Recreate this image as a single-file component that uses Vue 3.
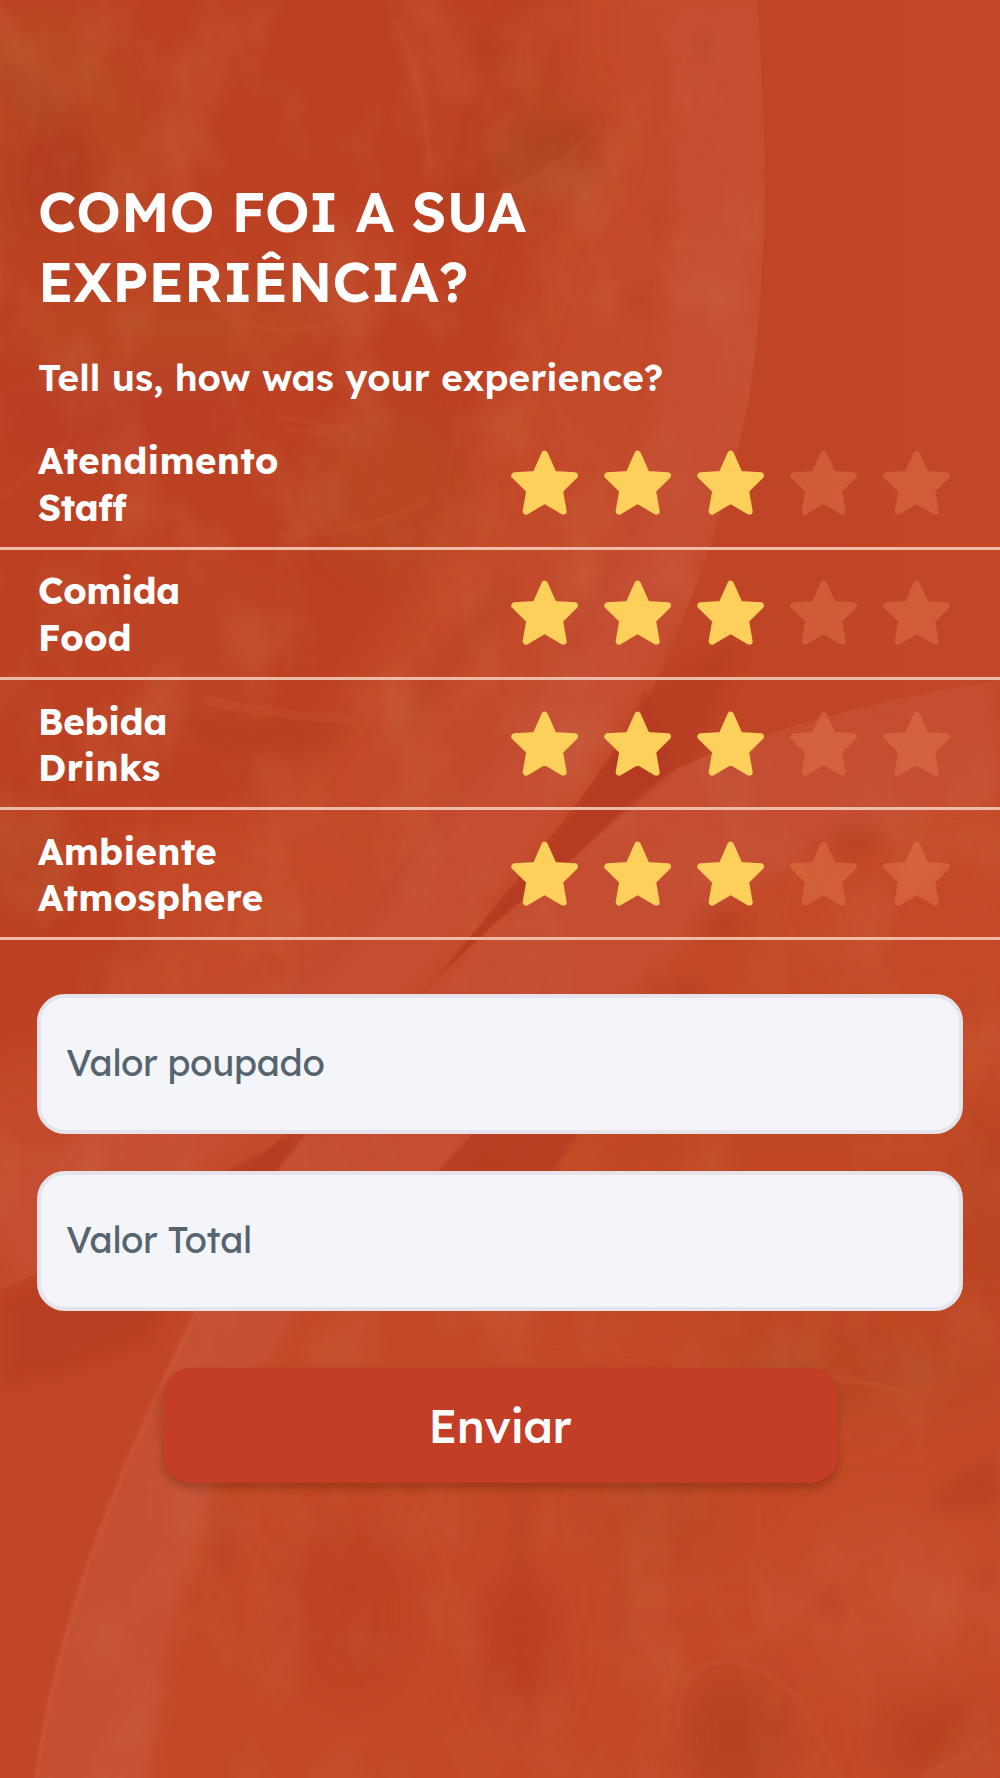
<script setup>
import { ref } from 'vue'

const ratings = ref([
  { id: 'staff', pt: 'Atendimento', en: 'Staff', value: 3 },
  { id: 'food', pt: 'Comida', en: 'Food', value: 3 },
  { id: 'drinks', pt: 'Bebida', en: 'Drinks', value: 3 },
  { id: 'atmosphere', pt: 'Ambiente', en: 'Atmosphere', value: 3 }
])
const saved = ref('')
const total = ref('')
</script>

<template>
  <main class="screen">
    <svg class="backdrop" viewBox="0 0 1000 1778" preserveAspectRatio="none" aria-hidden="true">
      <defs>
        <filter id="b2" x="-20%" y="-20%" width="140%" height="140%"><feGaussianBlur stdDeviation="1.5" /></filter>
        <filter id="b8" x="-50%" y="-50%" width="200%" height="200%"><feGaussianBlur stdDeviation="8" /></filter>
        <filter id="b30" x="-60%" y="-60%" width="220%" height="220%"><feGaussianBlur stdDeviation="24" /></filter>
        <filter id="mottle" x="0" y="0" width="100%" height="100%">
          <feTurbulence type="fractalNoise" baseFrequency=".013 .009" numOctaves="4" seed="12" />
          <feColorMatrix values="0 0 0 0 .63  0 0 0 0 .22  0 0 0 0 .1  2.6 0 0 0 -1.15" />
        </filter>
        <linearGradient id="wood" x1="0" x2="1" y1="0" y2="0">
          <stop offset="0" stop-color="#c04627" /><stop offset=".8" stop-color="#bf4526" /><stop offset="1" stop-color="#c24827" />
        </linearGradient>
        <clipPath id="plate">
          <path d="M0 0H757C768 150 768 270 750 390C732 500 690 610 645 705C585 800 500 900 435 980L240 1180L0 1290Z" />
        </clipPath>
        <clipPath id="plate2">
          <path d="M1000 680C880 700 760 730 676 769C630 795 600 835 574 857L497 921L440 975L300 1130L196 1310C130 1450 60 1600 35 1778H1000Z" />
        </clipPath>
      </defs>
      <rect width="1000" height="1778" fill="url(#wood)" />
      <g fill="#b53a20" filter="url(#b8)" opacity=".55">
        <path d="M645 690L740 640L690 780L570 880L430 1000L250 1180L210 1180L440 970Z" />
        <path d="M0 1295L190 1240L150 1340L60 1375L0 1385Z" />
      </g>
      <g clip-path="url(#plate)">
        <rect width="1000" height="1300" fill="#c34a2a" />
        <path d="M715 0C727 150 725 290 705 400C675 540 600 670 525 780C420 920 240 1110 0 1240" fill="none" stroke="#c54d32" stroke-width="100" filter="url(#b8)" />
        <g filter="url(#b30)">
          <path d="M-50 -50H560C570 120 540 300 480 460C420 600 310 740 230 850L100 1020L-50 1080Z" fill="#bc4123" />
          <ellipse cx="40" cy="130" rx="110" ry="130" fill="#b94923" />
          <ellipse cx="50" cy="175" rx="40" ry="70" fill="#b23b21" />
          <ellipse cx="545" cy="150" rx="60" ry="60" fill="#b54620" />
          <ellipse cx="170" cy="330" rx="170" ry="40" fill="#b94923" />
          <ellipse cx="390" cy="490" rx="85" ry="80" fill="#b84721" />
          <ellipse cx="120" cy="410" rx="130" ry="45" fill="#ba3e25" />
          <ellipse cx="200" cy="640" rx="80" ry="100" fill="#bd4428" />
          <ellipse cx="20" cy="860" rx="60" ry="60" fill="#b84522" />
          <ellipse cx="230" cy="870" rx="120" ry="50" fill="#c44825" />
        </g>
        <rect width="1000" height="1300" filter="url(#mottle)" opacity=".2" />
        <g filter="url(#b8)" fill="#a83c1e" opacity=".28">
          <circle cx="705" cy="45" r="9" /><circle cx="640" cy="305" r="13" /><circle cx="660" cy="220" r="8" /><circle cx="490" cy="55" r="20" />
          <path d="M0 60Q90 80 100 220L70 200Q60 130 0 100ZM430 200Q510 130 600 120L590 150Q500 180 420 260Z" />
          <path d="M420 680L500 570L515 600L390 760ZM180 710Q280 740 350 710L340 750Q240 760 180 730Z" />
        </g>
        <g filter="url(#b2)" fill="none" stroke="#ca6034" opacity=".2" stroke-width="5">
          <path d="M210 305Q285 355 370 305" /><path d="M480 200Q550 180 600 125" /><path d="M395 20Q425 80 430 170" />
          <path d="M205 700Q270 715 355 720" stroke-width="9" /><path d="M275 415L345 430M285 430L335 433" />
          <path d="M0 500Q30 470 70 440M280 535Q360 535 430 500" />
        </g>
        <path d="M640 500Q600 620 480 770L330 960L170 1090" fill="none" stroke="#b23c22" stroke-width="6" opacity=".5" filter="url(#b8)" />
      </g>
      <g clip-path="url(#plate2)">
        <rect y="650" width="1000" height="1130" fill="#c34926" />
        <path d="M1000 725C860 750 720 800 640 880L440 1080L300 1230" fill="none" stroke="#c44e31" stroke-width="150" filter="url(#b8)" />
        <path d="M280 1230C180 1380 110 1540 90 1800" fill="none" stroke="#c55034" stroke-width="120" filter="url(#b8)" />
        <g filter="url(#b30)">
          <path d="M520 1170L650 1110L1050 1100V1300L780 1330L500 1300Z" fill="#c04622" />
          <ellipse cx="930" cy="910" rx="110" ry="50" fill="#c54a27" />
          <ellipse cx="860" cy="1370" rx="150" ry="45" fill="#b84720" />
          <ellipse cx="990" cy="1210" rx="30" ry="120" fill="#b84522" />
          <ellipse cx="350" cy="1610" rx="65" ry="100" fill="#be4323" />
          <ellipse cx="520" cy="1650" rx="35" ry="80" fill="#ba3c22" />
          <ellipse cx="660" cy="1510" rx="60" ry="60" fill="#bb4722" />
          <ellipse cx="890" cy="1590" rx="100" ry="90" fill="#c64d29" />
          <ellipse cx="735" cy="1735" rx="50" ry="60" fill="#b34320" />
          <ellipse cx="940" cy="1740" rx="60" ry="40" fill="#b84321" />
        </g>
        <rect y="650" width="1000" height="1130" filter="url(#mottle)" opacity=".17" />
        <g filter="url(#b8)" fill="#a63a1d" opacity=".3">
          <ellipse cx="855" cy="840" rx="26" ry="16" /><ellipse cx="722" cy="925" rx="23" ry="16" /><ellipse cx="680" cy="990" rx="28" ry="9" />
          <ellipse cx="222" cy="1540" rx="8" ry="38" /><ellipse cx="830" cy="1605" rx="12" ry="16" /><ellipse cx="620" cy="1610" rx="7" ry="40" />
          <path d="M940 1490L1000 1450V1510L930 1510Z" />
          <ellipse cx="520" cy="1510" rx="6" ry="80" /><ellipse cx="990" cy="1580" rx="8" ry="10" />
        </g>
        <g filter="url(#b2)" fill="none" stroke="#cc6234" opacity=".22" stroke-width="5">
          <path d="M700 1370Q820 1365 920 1398" /><path d="M680 1730C670 1650 740 1640 800 1700Q820 1740 840 1778" /><path d="M920 1778Q960 1760 1000 1730" />
          <path d="M670 1650L675 1670" />
        </g>
      </g>
      <path d="M645 690L612 756L574 815L436 980L497 921L574 857L676 769Z" fill="#b33a20" filter="url(#b2)" opacity=".6" />
      <path d="M305 1130L210 1180H270L310 1130ZM475 1130H580L550 1175H435Z" fill="#b33a20" filter="url(#b2)" opacity=".7" />
      <path d="M196 1310C130 1450 60 1600 36 1778" fill="none" stroke="#ca5939" stroke-width="5" opacity=".55" filter="url(#b2)" />
    </svg>

    <form class="content" @submit.prevent>
      <header class="intro">
        <h1>COMO FOI A SUA<br />EXPERIÊNCIA?</h1>
        <p>Tell us, how was your experience?</p>
      </header>

      <section class="ratings">
        <div v-for="item in ratings" :key="item.id" class="row">
          <div class="label" :class="item.id">
            <span>{{ item.pt }}</span>
            <span>{{ item.en }}</span>
          </div>
          <div class="stars">
            <svg v-for="n in 5" :key="n" class="star" :class="{ on: n <= item.value }" viewBox="62 58 202 196" @click="item.value = n">
              <path d="M163 70L190 131L253 135L208 179L219 242L163 209L107 242L118 179L73 135L136 131Z" />
            </svg>
          </div>
        </div>
      </section>

      <div class="fields">
        <input v-model="saved" type="text" placeholder="Valor poupado" />
        <input v-model="total" type="text" placeholder="Valor Total" />
      </div>
      <button type="submit">Enviar</button>
    </form>
  </main>
</template>

<style>
body {
  background: #c04526;
}
</style>

<style scoped>
.screen {
  position: relative;
  height: 1778px;
  overflow: hidden;
  color: #fff;
  font-family: Lexend, Inter, "Noto Sans", sans-serif;
}
.backdrop {
  position: absolute;
  inset: 0;
  width: 100%;
  height: 100%;
}
.content {
  position: relative;
  display: flex;
  flex-direction: column;
  padding-top: 176px;
}
.intro {
  padding: 0 38px;
}
h1 {
  margin: 0;
  font-size: 55.7px;
  line-height: 70px;
  font-weight: 650;
  font-feature-settings: "cv08";
  white-space: nowrap;
}
.intro p {
  margin: 38px 0 0;
  font-size: 36.9px;
  line-height: 46px;
  font-weight: 600;
}
.ratings {
  margin-top: 19.25px;
}
.row {
  display: flex;
  justify-content: space-between;
  box-sizing: border-box;
  height: 130.25px;
  padding: 17.8px 50px 0 38px;
  border-bottom: 3px solid #eebba7;
}
.label {
  display: flex;
  flex-direction: column;
  align-items: flex-start;
  font-size: 36.5px;
  line-height: 46.5px;
  font-weight: 700;
  letter-spacing: 0.33px;
}
.staff span:last-child {
  letter-spacing: -0.4px;
}
.food span:first-child,
.drinks span:first-child {
  letter-spacing: -0.2px;
}
.stars {
  display: flex;
  gap: 25.7px;
  padding-top: 13px;
}
.star {
  width: 67.3px;
  height: 65.3px;
  fill: #f4925f;
  stroke: #f4925f;
  stroke-width: 20;
  stroke-linejoin: round;
  opacity: 0.3;
}
.star.on {
  fill: #fdd05b;
  stroke: #fdd05b;
  opacity: 1;
}
.fields {
  display: flex;
  flex-direction: column;
  gap: 37px;
  padding: 54px 37px 0;
}
input {
  box-sizing: border-box;
  width: 100%;
  height: 140px;
  padding: 0 25px 4px;
  border: 4px solid #e4e4ea;
  border-radius: 28px;
  outline: 0;
  background: #f3f5fb;
  color: #56646e;
  font: 400 36.5px Lexend, Inter, "Noto Sans", sans-serif;
  letter-spacing: -0.3px;
}
input::placeholder {
  color: #56646e;
  opacity: 1;
}
button {
  align-self: center;
  width: 675px;
  height: 115.5px;
  margin-top: 56.5px;
  padding: 0;
  border: 0;
  border-radius: 28px;
  background: #c23e27;
  box-shadow: 0 5px 10px rgba(95, 35, 10, 0.4);
  color: #fff;
  font: 500 46px Lexend, Inter, "Noto Sans", sans-serif;
  letter-spacing: -0.5px;
}
</style>
